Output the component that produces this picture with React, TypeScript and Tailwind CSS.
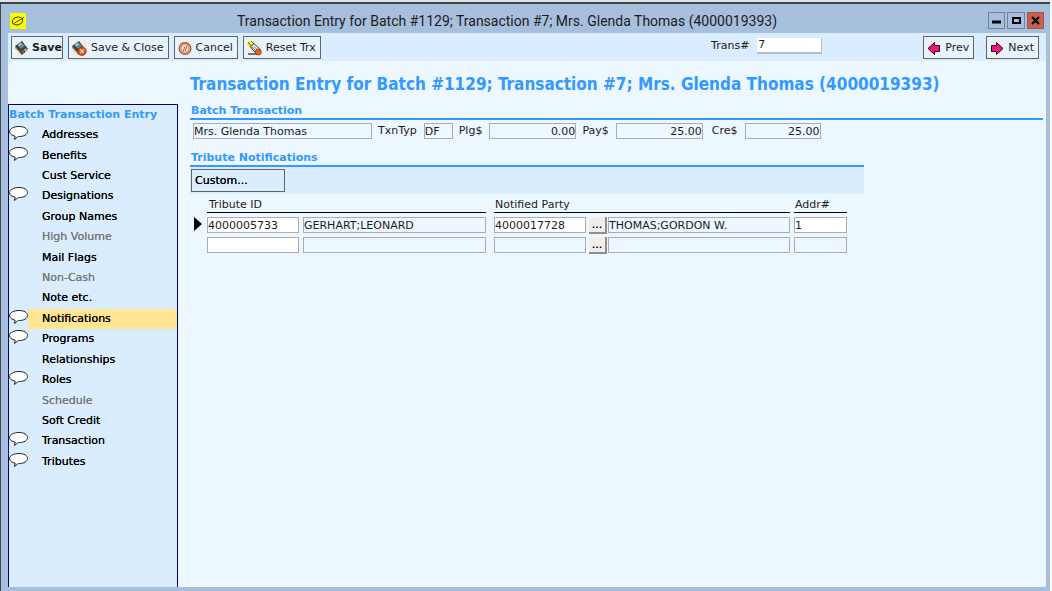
import type { ReactNode } from "react";

const title = "Transaction Entry for Batch #1129; Transaction #7; Mrs. Glenda Thomas (4000019393)";

const sections = [
  { name: "Addresses", hasNotes: true },
  { name: "Benefits", hasNotes: true },
  { name: "Cust Service" },
  { name: "Designations", hasNotes: true },
  { name: "Group Names" },
  { name: "High Volume", disabled: true },
  { name: "Mail Flags" },
  { name: "Non-Cash", disabled: true },
  { name: "Note etc." },
  { name: "Notifications", hasNotes: true, active: true },
  { name: "Programs", hasNotes: true },
  { name: "Relationships" },
  { name: "Roles", hasNotes: true },
  { name: "Schedule", disabled: true },
  { name: "Soft Credit" },
  { name: "Transaction", hasNotes: true },
  { name: "Tributes", hasNotes: true },
];

const rows = [
  { tributeId: "4000005733", tributeName: "GERHART;LEONARD", partyId: "4000017728", partyName: "THOMAS;GORDON W.", addr: "1", current: true },
  { tributeId: "", tributeName: "", partyId: "", partyName: "", addr: "", current: false },
];

const field = "h-4 border border-[#a9adb3] text-[11px] leading-none text-[#1c1c1c] outline-none";

function SaveIcon() {
  return (
    <svg width="14" height="16" viewBox="0 0 14 16" className="shrink-0">
      <rect width="14" height="16" fill="#eef0ee" />
      <path d="M0 6 7 1l6 8-6 6z" fill="#37393a" />
      <path d="M0 6 7 14v1.500L0 8z" fill="#a38a58" />
      <path d="M2 5 6 2l4 4-4 3z" fill="#5f8f96" />
      <path d="m3 5 3-2 1 1-3 2z" fill="#b8d6d0" />
      <path d="m7 11 4-3 1 2-4 3z" fill="#c9b07c" />
      <path d="m8 11 1-1 1 2-1 1z" fill="#26221c" />
    </svg>
  );
}

function SaveCloseIcon() {
  return (
    <svg width="15" height="16" viewBox="0 0 15 16" className="shrink-0">
      <rect width="15" height="16" fill="#eef0ee" />
      <path d="M0 6 7 1l6 8-6 6z" fill="#37393a" />
      <path d="M0 6 7 14v1.500L0 8z" fill="#a38a58" />
      <path d="M2 5 6 2l4 4-4 3z" fill="#5f8f96" />
      <path d="m3 5 3-2 1 1-3 2z" fill="#b8d6d0" />
      <circle cx="10" cy="11.300" r="4.300" fill="#d9531e" stroke="#8a3414" strokeWidth=".6" />
      <path d="m8.200 9.500 3.600 3.600m0-3.600-3.600 3.600" stroke="#f6dccf" strokeWidth="1.200" />
    </svg>
  );
}

function CancelIcon() {
  return (
    <svg width="14" height="16" viewBox="0 0 14 16" className="shrink-0">
      <rect width="14" height="16" fill="#eef0ee" />
      <circle cx="7" cy="8.500" r="5.900" fill="#e0a98c" stroke="#a2553a" strokeWidth="1.200" />
      <circle cx="7" cy="8.500" r="4" fill="#f3e6dc" stroke="#d08a66" strokeWidth="1" />
      <path d="m5 11.500 2-5m0 4.500 2-5" stroke="#b0664a" strokeWidth="1" />
    </svg>
  );
}

function ResetIcon() {
  return (
    <svg width="15" height="16" viewBox="0 0 15 16" className="shrink-0">
      <rect width="15" height="16" fill="#eef0ee" />
      <path d="M1 13h7l4 2H1z" fill="#777" />
      <path d="m0 3 2 0-1-2 3 1 1-2 1 3 2 1-4 5-3-3z" fill="#f7ee1e" />
      <path d="m3.500 7 3.500-3.500 6 6-4 4z" fill="#f3f3f3" stroke="#2d2d2d" />
      <path d="m5 7 5 5M6.500 6l5 5" stroke="#555" strokeWidth=".8" />
      <path d="m1 2 3 4M4 1l3 3" stroke="#333" strokeWidth=".8" />
      <circle cx="11.300" cy="12" r="3" fill="#e8611c" stroke="#873510" strokeWidth=".7" />
    </svg>
  );
}

function ArrowIcon({ right = false }: { right?: boolean }) {
  return (
    <svg width="14" height="16" viewBox="0 0 14 16" className="shrink-0">
      <rect width="14" height="16" fill="#eef0ee" />
      <path
        d={right ? "M1.500 5.500H6.500V2.500L13 8.500 6.500 14.500V11.500H1.500z" : "M12.500 5.500H7.500V2.500L1 8.500 7.500 14.500V11.500H12.500z"}
        fill="#ff0a8c"
        stroke="#111"
      />
    </svg>
  );
}

function BubbleIcon() {
  return (
    <svg width="19" height="18" viewBox="0 0 19 18" className="shrink-0">
      <path
        d="M10 .5C15 .5 18.500 2.600 18.500 5.500S15 10.500 10.500 10.500C9.500 10.500 9 10.600 8.500 11L5.500 13.500 6.200 10.200C3 9.500 .5 8 .5 5.500 .5 2.600 5 .5 10 .5z"
        fill="#fff"
        stroke="#222"
      />
    </svg>
  );
}

function ToolButton({ icon, children, bold = false }: { icon: ReactNode; children: ReactNode; bold?: boolean }) {
  return (
    <button
      className={`flex h-[23px] items-center border border-[#5f6467] bg-[#e8f4fd] pl-[3px] text-[11px] leading-4 whitespace-nowrap text-[#1c1c1c] ${
        bold ? "gap-[3px] font-bold" : "gap-1 pr-1"
      }`}
    >
      {icon}
      <span className="pt-px">{children}</span>
    </button>
  );
}

function HeaderField({ label, value, className }: { label: string; value: string; className: string }) {
  return (
    <label className="flex items-center gap-[7px]">
      {label}
      <input readOnly defaultValue={value} className={`${field} bg-transparent ${className}`} />
    </label>
  );
}

export default function App() {
  return (
    <div className="mr-0.5 flex min-h-screen flex-col border-t-2 border-[#dce6ea] bg-[#a6bfdd] font-['DejaVu_Sans',Verdana,sans-serif] text-[11px] leading-4 text-[#1c1c1c]">
      <div className="flex grow flex-col border-t-2 border-l border-[#3c4246] pr-1 pb-1 pl-[7px]">
        {/* Title bar */}
        <header className="flex h-[29px] items-center justify-between pt-1">
          <svg width="16" height="16" viewBox="0 0 16 16" className="ml-0.5 shrink-0">
            <rect width="16" height="16" fill="#fdfd00" />
            <ellipse cx="7.500" cy="8" rx="5.200" ry="3.800" fill="none" stroke="#4c4c00" strokeWidth="1.100" transform="rotate(-15 7.500 8)" />
            <path d="M4.500 10 14 4.500" stroke="#4c4c00" strokeWidth="1" />
          </svg>
          <span className="font-[Roboto,'Open_Sans',sans-serif] text-[14px] whitespace-nowrap">{title}</span>
          <div className="flex gap-0.5 pr-0.5">
            <button aria-label="Minimize" className="flex h-[17px] w-[17px] items-center justify-center border border-[#71839b]">
              <svg width="9" height="9" viewBox="0 0 9 9"><path d="M0 6h9" stroke="#000" strokeWidth="3" /></svg>
            </button>
            <button aria-label="Maximize" className="flex h-[17px] w-[18px] items-center justify-center border border-[#71839b]">
              <svg width="9" height="9" viewBox="0 0 9 9"><path d="M1 2h7v5H1z" fill="none" stroke="#000" strokeWidth="2" /></svg>
            </button>
            <button aria-label="Close" className="flex h-[17px] w-[17px] items-center justify-center border border-[#9c5750] bg-[#c9604d]">
              <svg width="9" height="9" viewBox="0 0 9 9"><path d="m1 1 7 7m0-7L1 8" stroke="#000" strokeWidth="2" /></svg>
            </button>
          </div>
        </header>

        {/* Toolbar */}
        <div className="flex h-7 items-start gap-[5px] bg-[#d9edfe] pt-[3px] pr-[7px] pl-[3px]">
          <ToolButton bold icon={<SaveIcon />}>Save</ToolButton>
          <ToolButton icon={<SaveCloseIcon />}>Save &amp; Close</ToolButton>
          <ToolButton icon={<CancelIcon />}>Cancel</ToolButton>
          <ToolButton icon={<ResetIcon />}>Reset Trx</ToolButton>
          <label className="ml-auto flex items-center gap-2 pt-0.5">
            Trans#
            <input defaultValue="7" className="h-4 w-[65px] border-r border-b-2 border-[#b9bcc0] bg-white px-px text-[11px] outline-none" />
          </label>
          <div className="ml-24 flex gap-3">
            <ToolButton icon={<ArrowIcon />}>Prev</ToolButton>
            <ToolButton icon={<ArrowIcon right />}>Next</ToolButton>
          </div>
        </div>

        <div className="flex grow bg-[#ecf7ff]">
          {/* Sidebar */}
          <nav className="mt-[43px] w-[170px] shrink-0 border border-b-0 border-[#00007c] bg-[#d9edfe]">
            <h2 className="leading-5 font-bold whitespace-nowrap text-[#3399ff]">Batch Transaction Entry</h2>
            <ul className="grid h-[347px] auto-rows-fr">
              {sections.map((s) => (
                <li key={s.name} className="flex items-center">
                  <span className="w-[19px] shrink-0">{s.hasNotes && <BubbleIcon />}</span>
                  <a
                    href="#"
                    className={`flex h-full grow items-center pl-3.5 [text-shadow:0_0_0_currentColor] ${s.active ? "bg-[#ffe594]" : ""} ${
                      s.disabled ? "text-[#777]" : "text-black"
                    }`}
                  >
                    {s.name}
                  </a>
                </li>
              ))}
            </ul>
          </nav>

          <main className="min-w-0 grow pt-2.5 pr-[3px] pl-3">
            <h1 className="font-['DejaVu_Sans_Condensed',Tahoma,sans-serif] text-[17px] leading-[26px] font-bold whitespace-nowrap text-[#3399ff]">
              {title}
            </h1>

            <section className="mt-1.5">
              <h2 className="border-b-2 border-[#3399ff] pl-px leading-[15px] font-bold text-[#3399ff]">Batch Transaction</h2>
              <div className="flex items-center gap-1.5 pt-[3px] pl-[3px]">
                <input readOnly aria-label="Constituent" defaultValue="Mrs. Glenda Thomas" className={`${field} w-[179px] bg-transparent`} />
                <HeaderField label="TxnTyp" value="DF" className="w-[29px]" />
                <HeaderField label="Plg$" value="0.00" className="w-[87px] text-right" />
                <HeaderField label="Pay$" value="25.00" className="mr-[3px] w-[87px] text-right" />
                <HeaderField label="Cre$" value="25.00" className="w-[76px] text-right" />
              </div>
            </section>

            <section className="mt-[11px] max-w-[674px]">
              <h2 className="border-b-2 border-[#3399ff] pl-px leading-[15px] font-bold text-[#3399ff]">Tribute Notifications</h2>
              <div className="bg-[#d9edfe] py-0.5 pl-px">
                <button className="block h-[23px] w-[94px] border border-[#5f6467] pl-[3px] text-left text-black [text-shadow:0_0_0_currentColor]">
                  Custom...
                </button>
              </div>

              <table className="table-fixed border-collapse">
                <colgroup>
                  <col className="w-[17px]" />
                  <col className="w-[287px]" />
                  <col className="w-[300px]" />
                  <col className="w-[53px]" />
                </colgroup>
                <thead>
                  <tr className="text-left leading-[15px]">
                    <th></th>
                    <th className="pt-[3px] pr-2 pb-1 font-normal"><div className="border-b border-black pl-0.5">Tribute ID</div></th>
                    <th className="pt-[3px] pr-1 pb-1 font-normal"><div className="border-b border-black pl-px">Notified Party</div></th>
                    <th className="pt-[3px] pb-1 font-normal"><div className="border-b border-black pl-px">Addr#</div></th>
                  </tr>
                </thead>
                <tbody>
                  {rows.map((row, i) => (
                    <tr key={i} className="h-5 align-top">
                      <td>
                        {row.current && (
                          <svg width="8" height="14" viewBox="0 0 8 14" className="ml-1 block"><path d="M0 0 8 7 0 14z" /></svg>
                        )}
                      </td>
                      <td className="pr-2">
                        <div className="flex gap-1">
                          <input aria-label="Tribute ID" defaultValue={row.tributeId} className={`${field} w-[92px] bg-white`} />
                          <input readOnly aria-label="Tribute name" defaultValue={row.tributeName} className={`${field} min-w-0 grow bg-transparent`} />
                        </div>
                      </td>
                      <td className="pr-1">
                        <div className="flex">
                          <input
                            aria-label="Notified party ID"
                            defaultValue={row.partyId}
                            className={`${field} w-[92px] ${row.current ? "bg-white" : "bg-transparent"}`}
                          />
                          <button
                            aria-label="Find party"
                            className="ml-[3px] h-[17px] w-[18px] border-r-2 border-b-2 border-[#8e8e8e] bg-[#f0eeec] leading-none text-black [text-shadow:0_0_0_currentColor]"
                          >
                            ...
                          </button>
                          <input readOnly aria-label="Notified party name" defaultValue={row.partyName} className={`${field} ml-px min-w-0 grow bg-transparent`} />
                        </div>
                      </td>
                      <td>
                        <input
                          aria-label="Address number"
                          defaultValue={row.addr}
                          className={`${field} block w-full ${row.current ? "bg-white" : "bg-transparent"}`}
                        />
                      </td>
                    </tr>
                  ))}
                </tbody>
              </table>
            </section>
          </main>
        </div>
      </div>
    </div>
  );
}
